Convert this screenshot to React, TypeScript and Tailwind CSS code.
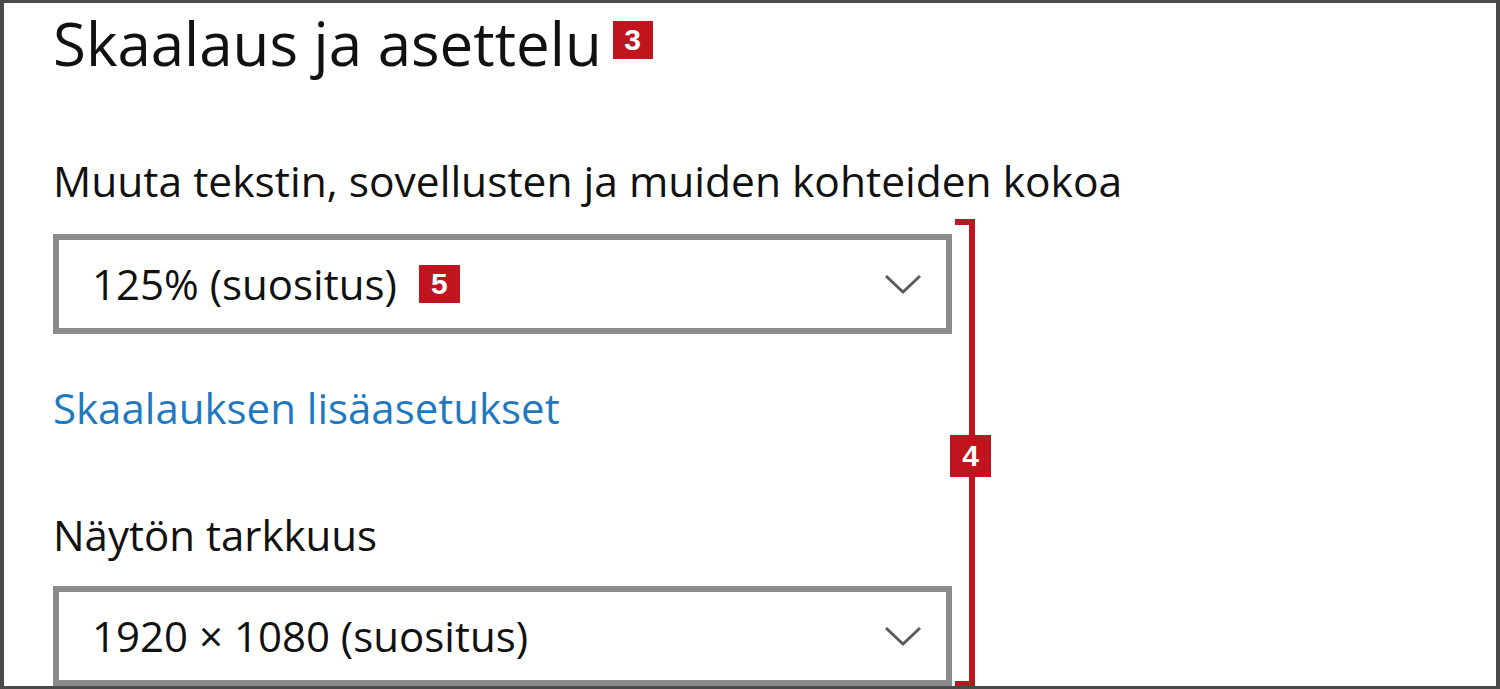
import React from "react";

function Chevron() {
  return (
    <svg width="38" height="22" viewBox="0 0 38 22" className="block">
      <polyline points="2,3 19,19 36,3" fill="none" stroke="#5a5a5a" strokeWidth="3" />
    </svg>
  );
}

function Badge({ n, className }: { n: string; className?: string }) {
  return (
    <div
      className={
        "flex items-center justify-center bg-[#c0141e] text-white font-['Liberation_Sans',Arial,sans-serif] font-bold text-[30px] leading-none " +
        (className ?? "")
      }
    >
      {n}
    </div>
  );
}

export default function App() {
  return (
    <div className="relative w-[1500px] h-[689px] overflow-hidden bg-white border-solid border-[#4a4a4a] border-t-[3px] border-l-[4px] border-r-[4px] border-b-[3px] font-['Open_Sans','Noto_Sans',sans-serif] text-[#111111]">
      <div className="flex flex-col pl-[49px]">
        <div className="flex items-center gap-[11px] h-[80px]">
          <h1 className="text-[60px] leading-[80px] font-normal">Skaalaus ja asettelu</h1>
          <Badge n="3" className="w-[40px] h-[38px] mt-[-6px]" />
        </div>
        <div className="mt-[70px] text-[42.5px] leading-[56px]">Muuta tekstin, sovellusten ja muiden kohteiden kokoa</div>
        <div className="mt-[25px] w-[899px] h-[100px] border-[6px] border-solid border-[#8b8b8b] flex items-center justify-between pl-[33px] pr-[24px]">
          <div className="flex items-center gap-[22px]">
            <span className="text-[42px] leading-[56px]">125% (suositus)</span>
            <Badge n="5" className="w-[41px] h-[38px]" />
          </div>
          <Chevron />
        </div>
        <div className="mt-[46px] text-[42px] leading-[56px] text-[#1f79c1]">Skaalauksen lisäasetukset</div>
        <div className="mt-[71px] text-[42px] leading-[56px]">Näytön tarkkuus</div>
        <div className="mt-[23px] w-[899px] h-[100px] border-[6px] border-solid border-[#8b8b8b] flex items-center justify-between pl-[33px] pr-[24px]">
          <span className="text-[42px] leading-[56px]">1920 × 1080 (suositus)</span>
          <Chevron />
        </div>
      </div>
      <div className="absolute left-[951px] top-[216px] w-[20px] h-[467px] border-solid border-[#c0141e] border-t-[6px] border-r-[6px] border-b-[5px]" />
      <Badge n="4" className="absolute left-[946px] top-[432px] w-[41px] h-[42px]" />
    </div>
  );
}
